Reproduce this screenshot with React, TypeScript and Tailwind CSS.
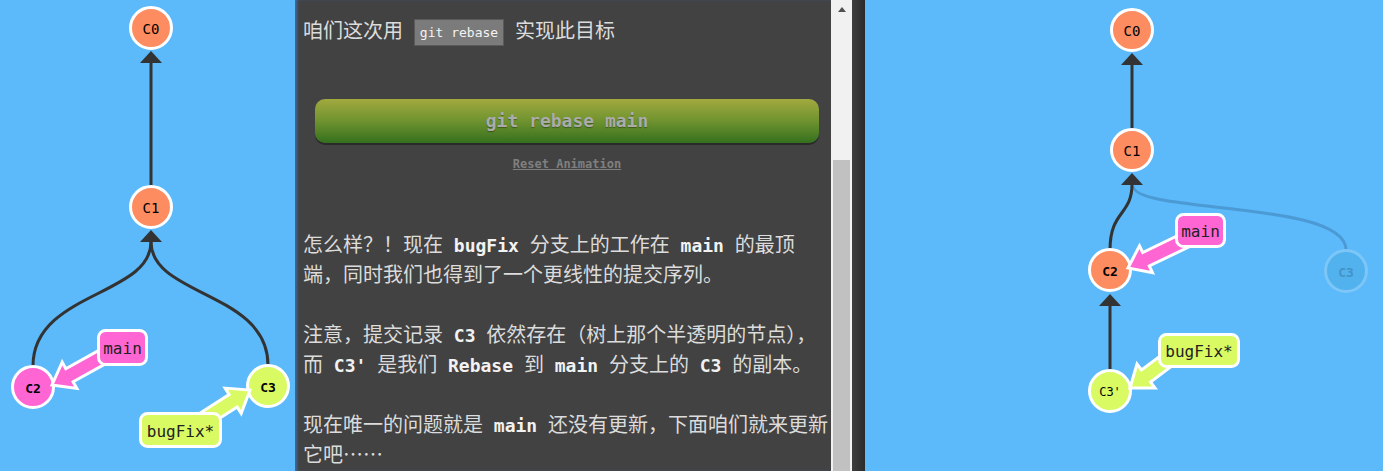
import React from "react";

const ORANGE = "#fd8c61";
const PINK = "#ff66d3";
const LIME = "#d9fa63";
const EDGE = "#333333";

function arrowPoints(fx: number, fy: number, tx: number, ty: number) {
  const dx = tx - fx;
  const dy = ty - fy;
  const len = Math.hypot(dx, dy);
  const ux = dx / len;
  const uy = dy / len;
  const nx = -uy;
  const ny = ux;
  const hl = 20;
  const hw = 15;
  const sw = 7.5;
  const bx = tx - ux * hl;
  const by = ty - uy * hl;
  const pts = [
    [tx, ty],
    [bx + nx * hw, by + ny * hw],
    [bx + nx * sw, by + ny * sw],
    [fx + nx * sw, fy + ny * sw],
    [fx - nx * sw, fy - ny * sw],
    [bx - nx * sw, by - ny * sw],
    [bx - nx * hw, by - ny * hw],
  ];
  return pts.map((p) => p.map((v) => v.toFixed(1)).join(",")).join(" ");
}

function Node({
  x,
  y,
  label,
  fill,
  bold = false,
  size = 14,
}: {
  x: number;
  y: number;
  label: string;
  fill: string;
  bold?: boolean;
  size?: number;
}) {
  return (
    <g>
      <circle cx={x} cy={y} r={20.5} fill={fill} stroke="#fff" strokeWidth={3} />
      <text
        x={x}
        y={y + 1}
        textAnchor="middle"
        dominantBaseline="central"
        fontFamily="'DejaVu Sans Mono', monospace"
        fontSize={size}
        fontWeight={bold ? 700 : 400}
        fill="#000"
      >
        {label}
      </text>
    </g>
  );
}

function Head({ x, y }: { x: number; y: number }) {
  return <polygon points={`${x},${y} ${x - 11},${y + 12} ${x + 11},${y + 12}`} fill={EDGE} />;
}

function Branch({
  box,
  text,
  fill,
  from,
  tip,
}: {
  box: [number, number, number, number];
  text: string;
  fill: string;
  from: [number, number];
  tip: [number, number];
}) {
  const [bx, by, bw, bh] = box;
  return (
    <g>
      <polygon
        points={arrowPoints(from[0], from[1], tip[0], tip[1])}
        fill={fill}
        stroke="#fff"
        strokeWidth={3}
        strokeLinejoin="miter"
      />
      <rect x={bx} y={by} width={bw} height={bh} rx={7} fill={fill} stroke="#fff" strokeWidth={3} />
      <text
        x={bx + bw / 2}
        y={by + bh / 2 + 1}
        textAnchor="middle"
        dominantBaseline="central"
        fontFamily="'DejaVu Sans Mono', monospace"
        fontSize={16}
        fill="#222"
      >
        {text}
      </text>
    </g>
  );
}

function M({ children }: { children: string }) {
  return (
    <b className="font-['DejaVu_Sans_Mono',monospace] text-[18px] leading-[18px] font-bold text-[#f2f2f2]">
      {children}
    </b>
  );
}

function LeftGraph() {
  return (
    <svg width={295} height={471} className="block">
      <line x1={151} y1={62} x2={151} y2={186} stroke={EDGE} strokeWidth={3} />
      <Head x={151} y={51} />
      <path d="M151 242 C151 296 33 292 33 366" stroke={EDGE} strokeWidth={3} fill="none" />
      <path d="M151 242 C151 296 268 292 268 365" stroke={EDGE} strokeWidth={3} fill="none" />
      <Head x={151} y={230} />
      <Node x={151} y={28} label="C0" fill={ORANGE} />
      <Node x={151} y={207} label="C1" fill={ORANGE} />
      <Node x={33} y={387} label="C2" fill={PINK} bold size={13} />
      <Node x={268} y={386} label="C3" fill={LIME} bold size={13} />
      <Branch box={[98.5, 330.5, 48, 34]} text="main" fill={PINK} from={[115, 350]} tip={[52, 385]} />
      <Branch box={[140.5, 413.5, 80, 33]} text="bugFix*" fill={LIME} from={[200, 422]} tip={[250, 390]} />
    </svg>
  );
}

function RightGraph() {
  return (
    <svg width={518} height={471} className="block">
      <path d="M268 186 C270 214 481 200 481 250" stroke="#4b9ad4" strokeWidth={3} fill="none" />
      <line x1={267} y1={64} x2={267} y2={130} stroke={EDGE} strokeWidth={3} />
      <Head x={267} y={53} />
      <path d="M267 184 C267 216 245 210 245 250" stroke={EDGE} strokeWidth={3} fill="none" />
      <Head x={267} y={173} />
      <line x1={245} y1={304} x2={245} y2={370} stroke={EDGE} strokeWidth={3} />
      <Head x={245} y={294} />
      <Node x={267} y={30} label="C0" fill={ORANGE} />
      <Node x={267} y={150} label="C1" fill={ORANGE} />
      <Node x={245} y={270} label="C2" fill={ORANGE} bold size={13} />
      <Node x={245} y={391} label="C3'" fill={LIME} size={12} />
      <g>
        <circle cx={481} cy={271} r={20.5} fill="#52b2ee" stroke="#7cc6f8" strokeWidth={3} />
        <text
          x={481}
          y={272}
          textAnchor="middle"
          dominantBaseline="central"
          fontFamily="'DejaVu Sans Mono', monospace"
          fontSize={13}
          fontWeight={700}
          fill="#4592c9"
        >
          C3
        </text>
      </g>
      <Branch box={[311.5, 214.5, 48, 32]} text="main" fill={PINK} from={[325, 238]} tip={[263, 268]} />
      <Branch box={[294.5, 334.5, 79, 32]} text="bugFix*" fill={LIME} from={[305, 358]} tip={[265, 388]} />
    </svg>
  );
}

export default function App() {
  return (
    <div className="flex h-[471px] w-[1383px] overflow-hidden bg-[#5cb9fa]">
      <div className="w-[295px] shrink-0 bg-[#5cb9fa]">
        <LeftGraph />
      </div>

      <div className="flex w-[557px] shrink-0 bg-[#424242]">
        <div className="w-[536px] shrink-0 pl-2 pt-[15px] shadow-[inset_3px_0_3px_-1px_rgba(60,120,190,0.8)] font-['Noto_Sans_CJK_SC',sans-serif] text-[20px] leading-[30px] text-[#dcdcdc]">
          <p className="h-[30px] whitespace-nowrap">
            咱们这次用
            <M> </M>
            <code className="inline-block border border-[#5a5a5a] bg-[#7b7b7b] px-[5px] font-['DejaVu_Sans_Mono',monospace] text-[13px] leading-[25px] text-[#f4f4f4] align-middle">
              git rebase
            </code>
            <M> </M>
            实现此目标
          </p>

          <div className="mx-3 mt-[54px] flex h-[44px] items-center justify-center rounded-[10px] bg-gradient-to-b from-[#a2a93f] via-[#6f932f] to-[#33701e] shadow-[0_2px_0_#2a2a2a]">
            <span className="font-['DejaVu_Sans_Mono',monospace] text-[18px] font-bold text-[#ababab] [text-shadow:0_1px_1px_rgba(0,0,0,0.35)]">
              git rebase main
            </span>
          </div>
          <div className="mt-[13px] text-center font-['DejaVu_Sans_Mono',monospace] text-[12px] leading-[16px] font-bold text-[#7f7f7f] underline">
            Reset Animation
          </div>

          <p className="mt-[57px]">
            怎么样？！现在<M>{" bugFix "}</M>分支上的工作在<M>{" main "}</M>的最顶端，同时我们也得到了一个更线性的提交序列。
          </p>
          <p className="mt-[30px]">
            注意，提交记录<M>{" C3 "}</M>依然存在（树上那个半透明的节点），而<M>{" C3' "}</M>是我们<M>{" Rebase "}</M>到<M>{" main "}</M>分支上的<M>{" C3 "}</M>的副本。
          </p>
          <p className="mt-[30px]">
            现在唯一的问题就是<M>{" main "}</M>还没有更新，下面咱们就来更新它吧……
          </p>
        </div>

        <div className="flex w-[21px] shrink-0 flex-col items-center bg-[#f1f1f1] pt-[7px]">
          <div className="h-0 w-0 border-x-4 border-b-[5px] border-x-transparent border-b-[#505050]" />
          <div className="mt-[148px] w-[17px] flex-1 bg-[#c1c1c1]" />
        </div>
      </div>

      <div className="w-[13px] shrink-0 bg-gradient-to-r from-[#3d3d3d] to-[#2b2b2b]" />

      <div className="flex-1 bg-[#5cb9fa]">
        <RightGraph />
      </div>
    </div>
  );
}
